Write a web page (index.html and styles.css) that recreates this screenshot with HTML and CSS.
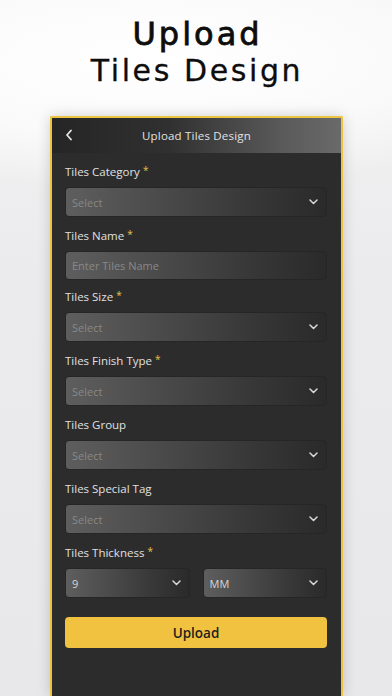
FILE: index.html
```html
<!DOCTYPE html>
<html>
<head>
<meta charset="utf-8">
<link rel="stylesheet" href="styles.css">
</head>
<body>
<div class="page">
  <header class="hero">
    <h1 class="hero-title"><span class="hero-line1">Upload</span><span class="hero-line2">Tiles Design</span></h1>
  </header>
  <section class="phone">
    <div class="topbar">
      <svg class="back" width="8" height="12" viewBox="0 0 8 12"><path d="M6 1.5 L2 6 L6 10.5" fill="none" stroke="#e6e6e6" stroke-width="1.8" stroke-linecap="round" stroke-linejoin="round"/></svg>
      <span class="topbar-title">Upload Tiles Design</span>
    </div>
    <div class="form">
      <div class="group">
        <label class="label">Tiles Category <span class="req">*</span></label>
        <div class="field select"><span class="ph">Select</span><svg class="chev" width="9" height="6" viewBox="0 0 9 6"><path d="M1 1 L4.5 4.5 L8 1" fill="none" stroke="#d8d8d8" stroke-width="1.5" stroke-linecap="round" stroke-linejoin="round"/></svg></div>
      </div>
      <div class="group group-name">
        <label class="label">Tiles Name <span class="req">*</span></label>
        <div class="field input"><span class="ph">Enter Tiles Name</span></div>
      </div>
      <div class="group">
        <label class="label">Tiles Size <span class="req">*</span></label>
        <div class="field select"><span class="ph">Select</span><svg class="chev" width="9" height="6" viewBox="0 0 9 6"><path d="M1 1 L4.5 4.5 L8 1" fill="none" stroke="#d8d8d8" stroke-width="1.5" stroke-linecap="round" stroke-linejoin="round"/></svg></div>
      </div>
      <div class="group">
        <label class="label">Tiles Finish Type <span class="req">*</span></label>
        <div class="field select"><span class="ph">Select</span><svg class="chev" width="9" height="6" viewBox="0 0 9 6"><path d="M1 1 L4.5 4.5 L8 1" fill="none" stroke="#d8d8d8" stroke-width="1.5" stroke-linecap="round" stroke-linejoin="round"/></svg></div>
      </div>
      <div class="group">
        <label class="label">Tiles Group</label>
        <div class="field select"><span class="ph">Select</span><svg class="chev" width="9" height="6" viewBox="0 0 9 6"><path d="M1 1 L4.5 4.5 L8 1" fill="none" stroke="#d8d8d8" stroke-width="1.5" stroke-linecap="round" stroke-linejoin="round"/></svg></div>
      </div>
      <div class="group">
        <label class="label">Tiles Special Tag</label>
        <div class="field select"><span class="ph">Select</span><svg class="chev" width="9" height="6" viewBox="0 0 9 6"><path d="M1 1 L4.5 4.5 L8 1" fill="none" stroke="#d8d8d8" stroke-width="1.5" stroke-linecap="round" stroke-linejoin="round"/></svg></div>
      </div>
      <div class="group">
        <label class="label">Tiles Thickness <span class="req">*</span></label>
        <div class="pair">
          <div class="field select"><span class="val">9</span><svg class="chev" width="9" height="6" viewBox="0 0 9 6"><path d="M1 1 L4.5 4.5 L8 1" fill="none" stroke="#d8d8d8" stroke-width="1.5" stroke-linecap="round" stroke-linejoin="round"/></svg></div>
          <div class="field select"><span class="val">MM</span><svg class="chev" width="9" height="6" viewBox="0 0 9 6"><path d="M1 1 L4.5 4.5 L8 1" fill="none" stroke="#d8d8d8" stroke-width="1.5" stroke-linecap="round" stroke-linejoin="round"/></svg></div>
        </div>
      </div>
      <button class="upload">Upload</button>
    </div>
  </section>
</div>
</body>
</html>
```
FILE: styles.css
```css
* { box-sizing: border-box; }
html, body { margin: 0; padding: 0; }
body {
  width: 392px;
  height: 696px;
  overflow: hidden;
  font-family: "Open Sans", "DejaVu Sans", sans-serif;
  background:
    radial-gradient(ellipse 420px 130px at 150px 60px, #ffffff 0%, #fafafa 60%, rgba(250,250,250,0) 100%),
    linear-gradient(180deg, #f3f3f3 0%, #ebebed 40%, #e8e8ea 100%);
}
.page {
  height: 696px;
  display: flex;
  flex-direction: column;
}
.hero {
  padding-top: 16px;
  height: 116px;
  text-align: center;
}
.hero-title {
  margin: 0;
  font-family: "DejaVu Sans", sans-serif;
  font-weight: normal;
  color: #0d0d0d;
  display: flex;
  flex-direction: column;
  align-items: center;
}
.hero-line1 {
  font-size: 32px;
  line-height: 37px;
  letter-spacing: 3px;
  -webkit-text-stroke: 0.8px #0d0d0d;
  padding-left: 3px;
}
.hero-line2 {
  font-size: 30px;
  line-height: 35px;
  letter-spacing: 2.6px;
  -webkit-text-stroke: 0.3px #0d0d0d;
  padding-left: 2px;
}
.phone {
  flex: 1;
  margin: 0 49px 0 50px;
  border: 2px solid #ecc342;
  border-bottom: none;
  border-radius: 2px 2px 0 0;
  background: #2c2c2c;
  box-shadow: 0 0 14px rgba(0,0,0,0.18);
  display: flex;
  flex-direction: column;
}
.topbar {
  height: 35px;
  display: flex;
  align-items: center;
  justify-content: center;
  background: linear-gradient(90deg, #252525 0%, #303030 40%, #5a5a5a 80%, #6a6a6a 100%);
  position: relative;
}
.back {
  position: absolute;
  left: 13px;
  top: 11px;
}
.topbar-title {
  font-size: 11.5px;
  color: #e2e2e2;
  letter-spacing: 0.2px;
}
.form {
  padding: 12px 14px 0 13px;
  display: flex;
  flex-direction: column;
}
.group {
  display: flex;
  flex-direction: column;
  margin-bottom: 12px;
}
.group-name { margin-bottom: 10px; }
.label {
  display: block;
  font-size: 11.5px;
  line-height: 14px;
  height: 14px;
  color: #e0e0e0;
  margin-bottom: 8px;
}
.req { color: #e8c24a; font-size: 10px; position: relative; top: -2px; line-height: 0; }
.field {
  height: 30px;
  border-radius: 4px;
  border: 1px solid #262626;
  background: linear-gradient(90deg, #5e5e5e 0%, #4b4b4b 35%, #383838 70%, #2a2a2a 100%);
  display: flex;
  align-items: center;
  justify-content: space-between;
  padding: 0 6px 0 6px;
}
.input { height: 29px; }
.ph {
  font-size: 11px;
  color: #888888;
}
.val {
  font-size: 11px;
  color: #d6d6d6;
}
.chev { margin-right: 2px; }
.pair {
  display: grid;
  grid-template-columns: 1fr 1fr;
  gap: 13px;
}
.upload {
  margin-top: 7px;
  height: 31px;
  border: none;
  border-radius: 4px;
  background: #f0c240;
  color: #1e1e1e;
  font-family: "Open Sans", "DejaVu Sans", sans-serif;
  font-size: 13.5px;
  font-weight: 600;
}
```
